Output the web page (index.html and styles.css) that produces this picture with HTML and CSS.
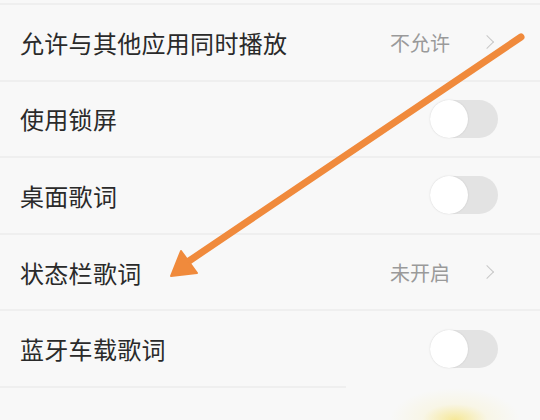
FILE: index.html
```html
<!DOCTYPE html>
<html lang="zh-CN">
<head>
    <meta charset="UTF-8">
    <meta name="viewport" content="width=device-width, initial-scale=1.0">
    <title>设置</title>
    <link rel="stylesheet" href="styles.css">
</head>
<body>
    <div class="settings">
        <div class="row">
            <span class="label">允许与其他应用同时播放</span>
            <span class="value">不允许<i class="chevron"></i></span>
        </div>
        <div class="row">
            <span class="label">使用锁屏</span>
            <span class="switch"></span>
        </div>
        <div class="row">
            <span class="label">桌面歌词</span>
            <span class="switch"></span>
        </div>
        <div class="row">
            <span class="label">状态栏歌词</span>
            <span class="value">未开启<i class="chevron"></i></span>
        </div>
        <div class="row">
            <span class="label">蓝牙车载歌词</span>
            <span class="switch"></span>
        </div>
        <div class="row-end"></div>
    </div>

    <!-- 标注箭头 -->
    <svg class="arrow" width="540" height="420" viewBox="0 0 540 420">
        <line x1="521" y1="37" x2="186" y2="263" stroke="#f08a3c" stroke-width="7" stroke-linecap="round"/>
        <polygon points="171,276 181,251 197,273" fill="#f08a3c" stroke="#f08a3c" stroke-width="2" stroke-linejoin="round"/>
    </svg>
    <div class="glow"></div>
</body>
</html>
```

FILE: styles.css
```css
/* Страница настроек */
body {
    margin: 0;
    width: 540px;
    height: 420px;
    overflow: hidden;
    background-color: #f8f8f8;
    font-family: "Noto Sans CJK SC", "Noto Sans", sans-serif;
    position: relative;
}

.settings {
    padding-top: 3px;
}

.row {
    display: flex;
    align-items: center;
    justify-content: space-between;
    height: 76.6px;
    box-sizing: border-box;
    border-top: 2px solid #efefef;
    padding: 0 42px 0 20px;
}

.label {
    font-size: 24px;
    color: #2a2a2a;
    letter-spacing: 0.3px;
}

.value {
    display: flex;
    align-items: center;
    font-size: 20px;
    color: #9a9a9a;
    margin-right: 6px;
}

.chevron {
    display: inline-block;
    width: 9px;
    height: 9px;
    border-top: 1.5px solid #c8c8c8;
    border-right: 1.5px solid #c8c8c8;
    transform: rotate(45deg);
    margin-left: 32px;
}

/* Переключатель */
.switch {
    position: relative;
    width: 68px;
    height: 38px;
    border-radius: 19px;
    background-color: #e3e3e3;
}

.switch::after {
    content: "";
    position: absolute;
    left: 0;
    top: 0;
    width: 38px;
    height: 38px;
    border-radius: 50%;
    background-color: #fff;
    box-shadow: 0 0 2px rgba(0, 0, 0, 0.12);
}

.row-end {
    width: 346px;
    border-top: 2px solid #efefef;
}

.arrow {
    position: absolute;
    left: 0;
    top: 0;
}

.glow {
    position: absolute;
    left: 380px;
    top: 385px;
    width: 150px;
    height: 35px;
    background: radial-gradient(ellipse 65px 32px at 50% 100%, rgba(245, 225, 110, 0.7) 0%, rgba(248, 240, 190, 0.3) 50%, rgba(248, 248, 248, 0) 100%);
}
```
